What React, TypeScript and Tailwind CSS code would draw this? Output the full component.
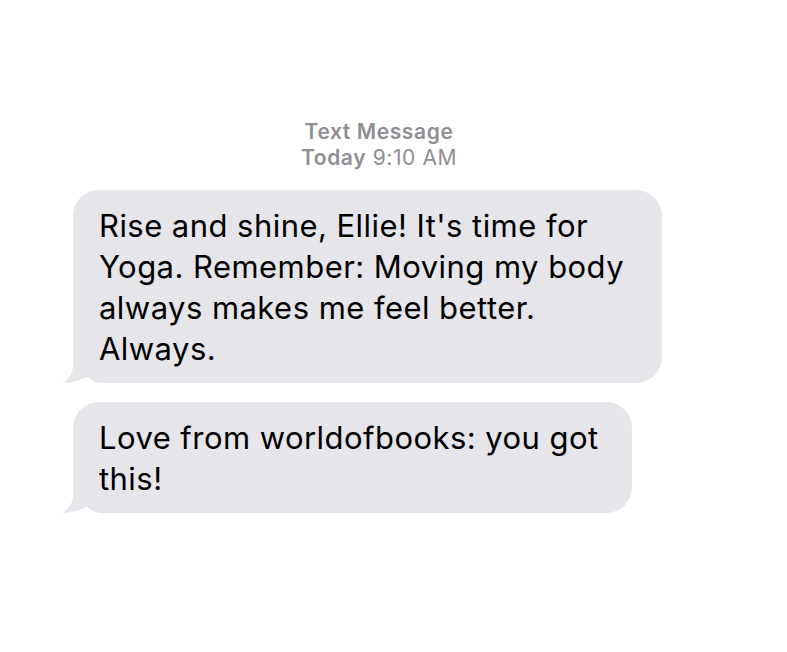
import React from "react";

function Tail() {
  return (
    <svg
      className="absolute left-[-11px] bottom-0"
      width="51"
      height="26"
      viewBox="0 0 51 26"
    >
      <rect x="11" y="0" width="40" height="26" fill="#ffffff" />
      <path
        d="M11 0 L11 8 C11 16 7 22 0 26 C9 26 18 23 25 20 C29 23 33 26 40 26 L51 26 L51 0 Z"
        fill="#e5e5ea"
      />
    </svg>
  );
}

function Bubble({ width, children }: { width: string; children: React.ReactNode }) {
  return (
    <div
      className={`relative ${width} rounded-[26px] rounded-bl-none bg-[#e5e5ea] pl-[26px] pr-6 pt-[15px] pb-[14px] text-[31px] leading-[41px] tracking-[0.45px] text-black`}
    >
      <Tail />
      <div className="relative">{children}</div>
    </div>
  );
}

export default function App() {
  return (
    <div
      className="w-[787px] h-[652px] bg-white"
      style={{ fontFamily: "Inter, 'Liberation Sans', sans-serif" }}
    >
      <div className="pt-[119px] pr-[29px] flex flex-col items-center text-[#8e8e93] text-[21px] leading-[26px] tracking-[0.6px]">
        <div className="font-semibold">Text Message</div>
        <div>
          <span className="font-semibold">Today</span> 9:10 AM
        </div>
      </div>
      <div className="pl-[73px] pt-[19px] flex flex-col gap-[19px]">
        <Bubble width="w-[589px]">
          Rise and shine, Ellie! It's time for
          <br />
          Yoga. Remember: Moving my body
          <br />
          always makes me feel better.
          <br />
          Always.
        </Bubble>
        <Bubble width="w-[559px]">
          Love from worldofbooks: you got
          <br />
          this!
        </Bubble>
      </div>
    </div>
  );
}
